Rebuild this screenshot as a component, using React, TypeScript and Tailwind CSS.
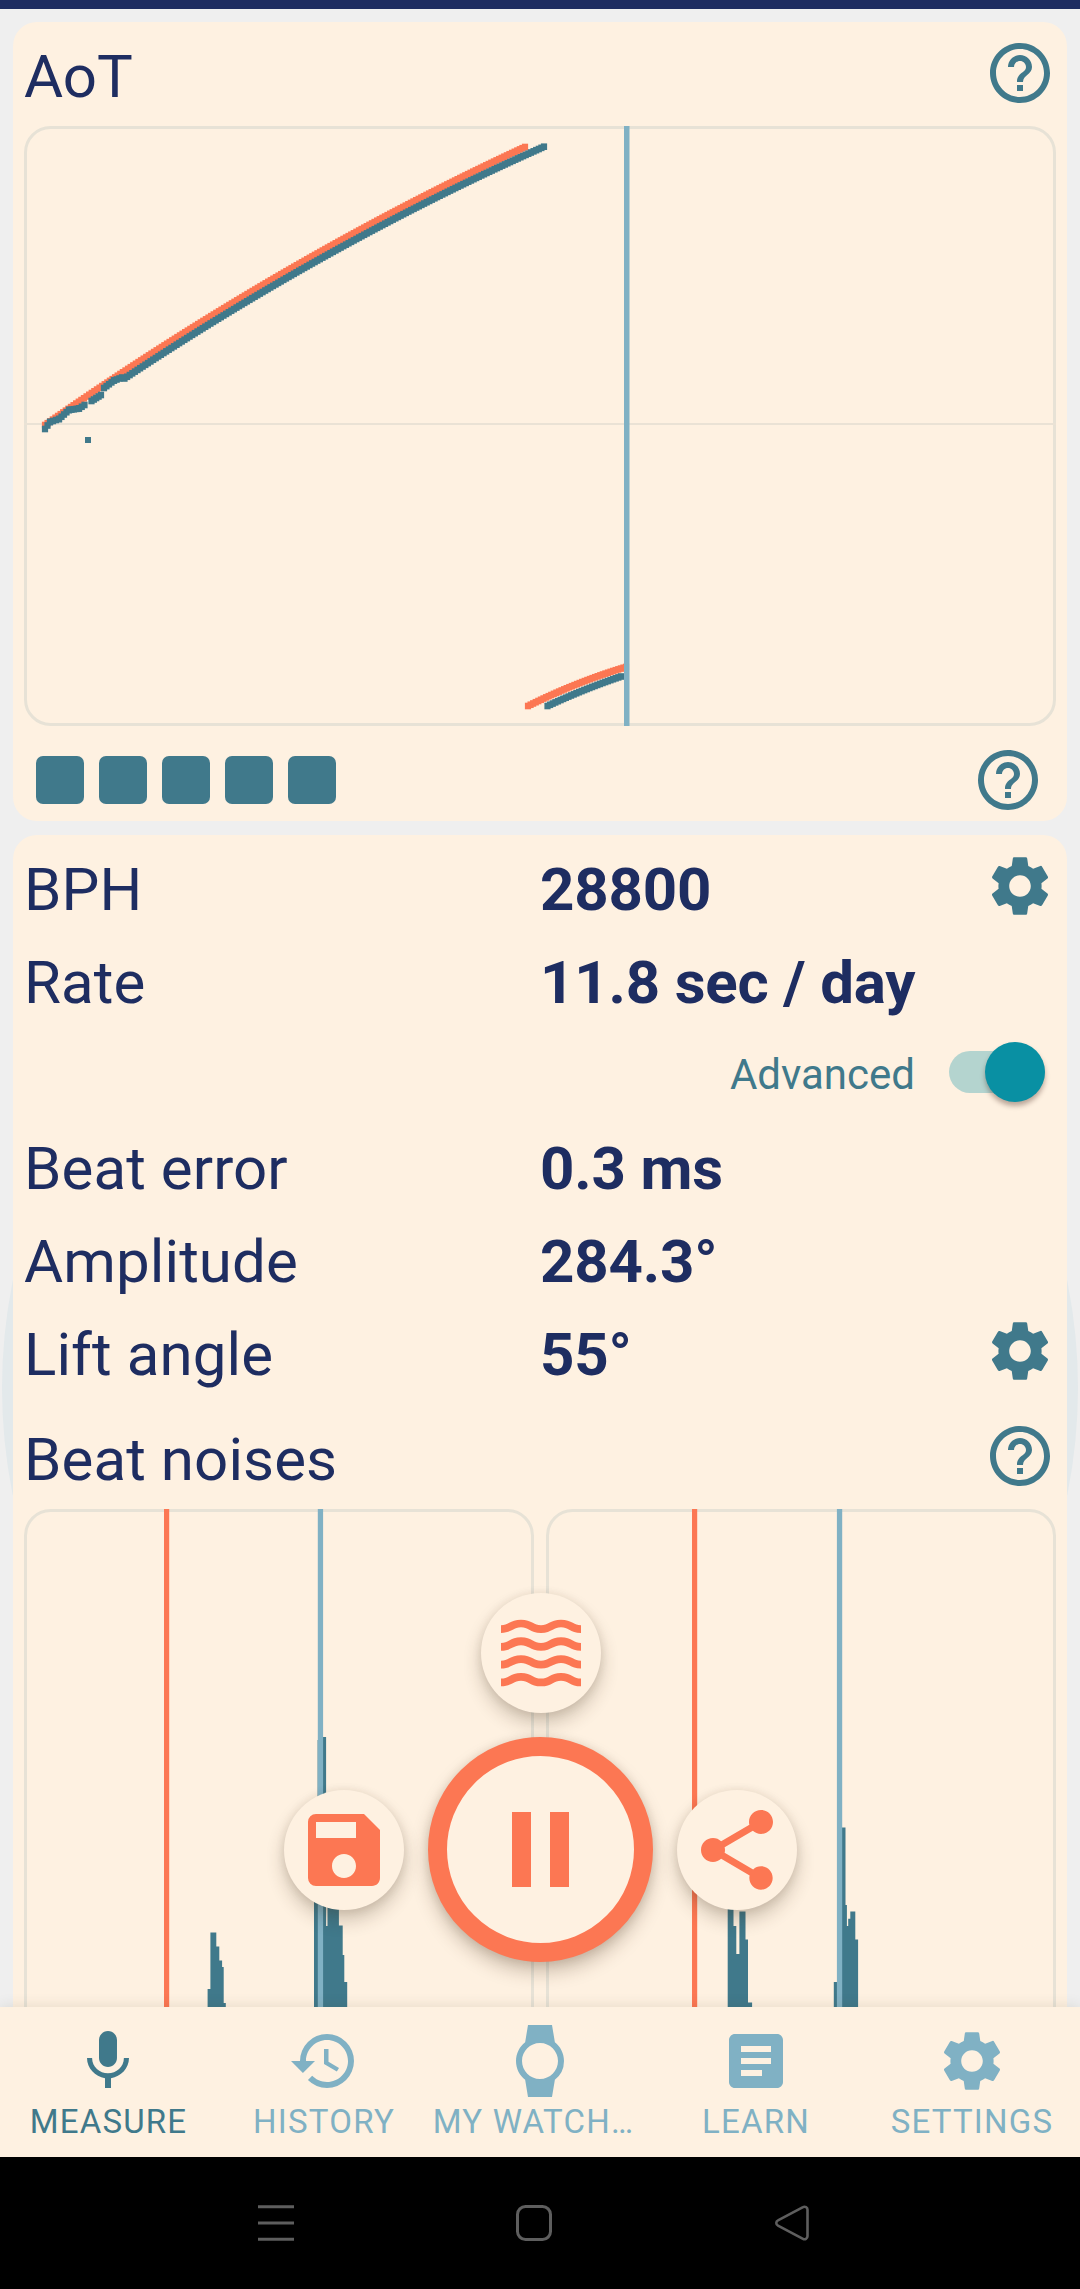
import type { ReactNode } from "react";
import {
  MdArticle,
  MdHelpOutline,
  MdHistory,
  MdMic,
  MdSave,
  MdSettings,
  MdShare,
  MdWatch,
  MdWaves,
} from "react-icons/md";

type Point = [number, number];
type Bar = [number, number, number];

const TEAL = "#40798b";
const SKY = "#80b1c4";
const CORAL = "#fc7753";
const FRAME = "#e7e2d6";

// A parabola between two end points, raised by `bulge` at its middle.
function arc([x1, y1]: Point, [x2, y2]: Point, bulge: number): Point[] {
  const dots: Point[] = [];
  const count = Math.round((x2 - x1) / 2.6);
  for (let i = 0; i <= count; i++) {
    const t = i / count;
    dots.push([x1 + (x2 - x1) * t, y1 + (y2 - y1) * t - 4 * t * (1 - t) * bulge]);
  }
  return dots;
}

function polyline(points: Point[]): Point[] {
  return points.slice(1).flatMap((p, i) => arc(points[i], p, 0));
}

function Trace({ dots, color }: { dots: Point[]; color: string }) {
  return (
    <g fill={color}>
      {dots.map(([x, y], i) => (
        <rect key={i} x={x - 3.1} y={y - 3.3} width={6.2} height={6.6} />
      ))}
    </g>
  );
}

const coralRise = arc([45, 425], [525, 147], 14);
const tealRise = arc([124.5, 378.5], [544, 146.7], 11.5);
const tealStart: Point[][] = [
  polyline([[45, 429], [50, 422], [59, 419], [69, 410], [79, 408.5], [84.5, 405]]),
  polyline([[91.5, 401], [101, 395]]),
  polyline([[104, 388], [114, 380.5], [122, 377.5]]),
];
const coralFall = arc([528, 706], [626, 667], 2.4);
const tealFall = arc([547.5, 706], [621, 676.5], 1.2);

function RateChart() {
  return (
    <svg viewBox="24 126 1032 600" className="block h-[600px] w-[1032px]">
      <rect x={25.5} y={127.5} width={1029} height={597} rx={25} fill="none" stroke={FRAME} strokeWidth={3} />
      <rect x={24} y={423} width={1032} height={2} fill="#eae2d5" />
      <Trace dots={coralRise} color={CORAL} />
      {tealStart.map((dots, i) => (
        <Trace key={i} dots={dots} color={TEAL} />
      ))}
      <Trace dots={tealRise} color={TEAL} />
      <rect x={85} y={437} width={6} height={6} fill={TEAL} />
      <Trace dots={coralFall} color={CORAL} />
      <Trace dots={tealFall} color={TEAL} />
      <rect x={624} y={126} width={5.5} height={600} fill={SKY} />
    </svg>
  );
}

const ticBars: Bar[] = [
  [207.6, 210.4, 1989], [210.4, 216, 1932.5], [216, 219, 1946.5], [219, 221.8, 1960.6], [221.8, 223.4, 1967],
  [223.4, 225.5, 2003], [314, 318, 1880], [317.6, 323, 1740], [323, 325.8, 1737], [325.8, 327.5, 1926],
  [327.5, 338.6, 1890], [338.6, 342.4, 1925.5], [342.4, 344, 1955], [344, 346.9, 1982],
];
const tocBars: Bar[] = [
  [727.7, 733.2, 1880], [733.2, 736, 1926], [736, 739.4, 1954], [739.4, 745.2, 1911.6],
  [745.2, 747.7, 1939.6], [747.7, 751.8, 2002.5], [833.8, 837, 1982],
  [842, 845.2, 1827.5], [845, 846.6, 1905], [846, 848.2, 1926], [848.2, 850.3, 1918.7], [850.3, 855, 1911.6],
  [855, 857.8, 1939.6],
];

function barsPath(bars: Bar[]): string {
  return bars.map(([x1, x2, top]) => `M${x1} 2109V${top}H${x2 + 0.3}V2109Z`).join("");
}

function NoiseChart({ left, bars, start, peak }: { left: number; bars: Bar[]; start: number; peak: number }) {
  return (
    <svg viewBox={`${left} 1509 510 600`} className="block h-[600px] w-[510px]">
      <rect x={left + 1.5} y={1510.5} width={507} height={597} rx={25} fill="none" stroke={FRAME} strokeWidth={3} />
      <path d={barsPath(bars)} fill={TEAL} />
      <rect x={start} y={1509} width={5.2} height={600} fill={CORAL} />
      <rect x={peak} y={1509} width={5.3} height={600} fill={SKY} />
    </svg>
  );
}

function Row({ label, value, action }: { label: string; value: string; action?: ReactNode }) {
  return (
    <div className="flex h-[93px] items-center">
      <span className="w-[516px] tracking-[0.1px]">{label}</span>
      <span className="flex-1 font-bold tracking-[-0.18px]">{value}</span>
      {action}
    </div>
  );
}

function Gear() {
  return <MdSettings className="mb-[7px] size-[72px] text-[#40798b]" />;
}

function Help() {
  return <MdHelpOutline className="mb-[7px] size-[72px] text-[#40798b]" />;
}

function Fab({ className, children }: { className: string; children: ReactNode }) {
  return (
    <button
      className={`absolute flex size-[120px] items-center justify-center rounded-full bg-[#fef1e1] text-[#fc7753] shadow-[0_10px_18px_rgba(60,40,20,0.24),0_1px_10px_rgba(60,40,20,0.10)] ${className}`}
    >
      {children}
    </button>
  );
}

const tabs = [
  { label: "MEASURE", icon: MdMic, color: "text-[#40798b]", labelClass: "pl-px" },
  { label: "HISTORY", icon: MdHistory, color: "text-[#80b1c4]", labelClass: "" },
  { label: "MY WATCH…", icon: MdWatch, color: "text-[#80b1c4]", labelClass: "pr-[13px]" },
  { label: "LEARN", icon: MdArticle, color: "text-[#80b1c4]", labelClass: "" },
  { label: "SETTINGS", icon: MdSettings, color: "text-[#80b1c4]", labelClass: "" },
];

export default function App() {
  return (
    <div className="flex h-[2289px] w-[1080px] flex-col overflow-hidden bg-[#efefef] font-[Roboto,sans-serif] text-[#1e2d61]">
      <div className="h-[9px] shrink-0 bg-[#1e2d61]" />

      <main className="relative h-[1998px] shrink-0 overflow-hidden pt-[13px] text-[60px] leading-none">
        <div className="absolute top-[841px] left-[2px] size-[1076px] rounded-full bg-[#e3e9eb]" />

        <section className="relative mx-[13px] h-[799px] rounded-[24px] bg-[#fef1e1] px-[11px]">
          <div className="flex h-[104px] items-center justify-between pt-[5px]">
            <h2>AoT</h2>
            <Help />
          </div>
          <RateChart />
          <div className="flex items-center justify-between px-3 pt-[30px]">
            <div className="flex gap-[15px]">
              {[0, 1, 2, 3, 4].map((i) => (
                <div key={i} className="size-12 rounded-[7px] bg-[#40798b]" />
              ))}
            </div>
            <MdHelpOutline className="-my-3 size-[72px] text-[#40798b]" />
          </div>
        </section>

        <section className="relative mx-[13px] mt-[14px] h-[1300px] rounded-[24px] bg-[#fef1e1] px-[11px] pt-2">
          <Row label="BPH" value="28800" action={<Gear />} />
          <Row label="Rate" value="11.8 sec / day" />
          <div className="flex h-[93px] items-center justify-end">
            <span className="mb-[2px] text-[42px] text-[#40798b]">Advanced</span>
            <div className="mr-[11px] mb-[7px] ml-[34px] flex h-[42px] w-[96px] items-center justify-end rounded-full bg-[#b4d4cf]">
              <div className="size-[60px] shrink-0 rounded-full bg-[#0990a3] shadow-[0_4px_5px_rgba(60,30,20,0.35)]" />
            </div>
          </div>
          <Row label="Beat error" value="0.3 ms" />
          <Row label="Amplitude" value="284.3°" />
          <Row label="Lift angle" value="55°" action={<Gear />} />
          <div className="flex h-[108px] items-center justify-between pt-[9px]">
            <h2 className="tracking-[0.1px]">Beat noises</h2>
            <Help />
          </div>
          <div className="flex gap-3">
            <NoiseChart left={24} bars={ticBars} start={164} peak={317.8} />
            <NoiseChart left={546} bars={tocBars} start={692} peak={836.9} />
          </div>
        </section>

        <Fab className="top-[1584px] left-[481px]">
          <MdWaves className="size-[96px]" />
        </Fab>
        <Fab className="top-[1781px] left-[284px]">
          <MdSave className="size-[96px]" />
        </Fab>
        <button className="absolute top-[1728px] left-[428px] flex size-[225px] items-center justify-center gap-[19px] rounded-full border-[19px] border-[#fc7753] bg-[#fef1e1] shadow-[0_10px_18px_rgba(60,40,20,0.26),0_1px_10px_rgba(60,40,20,0.12)]">
          <span className="h-[75px] w-[19px] bg-[#fc7753]" />
          <span className="h-[75px] w-[19px] bg-[#fc7753]" />
        </button>
        <Fab className="top-[1781px] left-[677px]">
          <MdShare className="size-[96px]" />
        </Fab>
      </main>

      <nav className="relative grid h-[150px] shrink-0 grid-cols-5 bg-[#fef1e1] shadow-[0_0_14px_rgba(60,40,20,0.12)]">
        {tabs.map(({ label, icon: Icon, color, labelClass }) => (
          <div key={label} className={`flex flex-col items-center pt-[18px] ${color}`}>
            <Icon className="size-[72px]" />
            <span className={`mt-[5px] text-[33px] leading-[40px] tracking-[1.2px] ${labelClass}`}>{label}</span>
          </div>
        ))}
      </nav>

      <div className="relative h-[132px] bg-black">
        <svg viewBox="0 0 1080 132" className="h-[132px] w-[1080px]" fill="none" stroke="#5e5e5e" strokeWidth={3}>
          <path d="M258 49.7h36M258 66h36M258 82.3h36" />
          <rect x={517.5} y={49.5} width={33} height={33} rx={8} />
          <path d="M803 50.2 778 63.3a3 3 0 0 0 0 5.4L803 81.8a3 3 0 0 0 4.5-2.6V52.8a3 3 0 0 0-4.5-2.6Z" strokeWidth={2.6} />
        </svg>
      </div>
    </div>
  );
}
